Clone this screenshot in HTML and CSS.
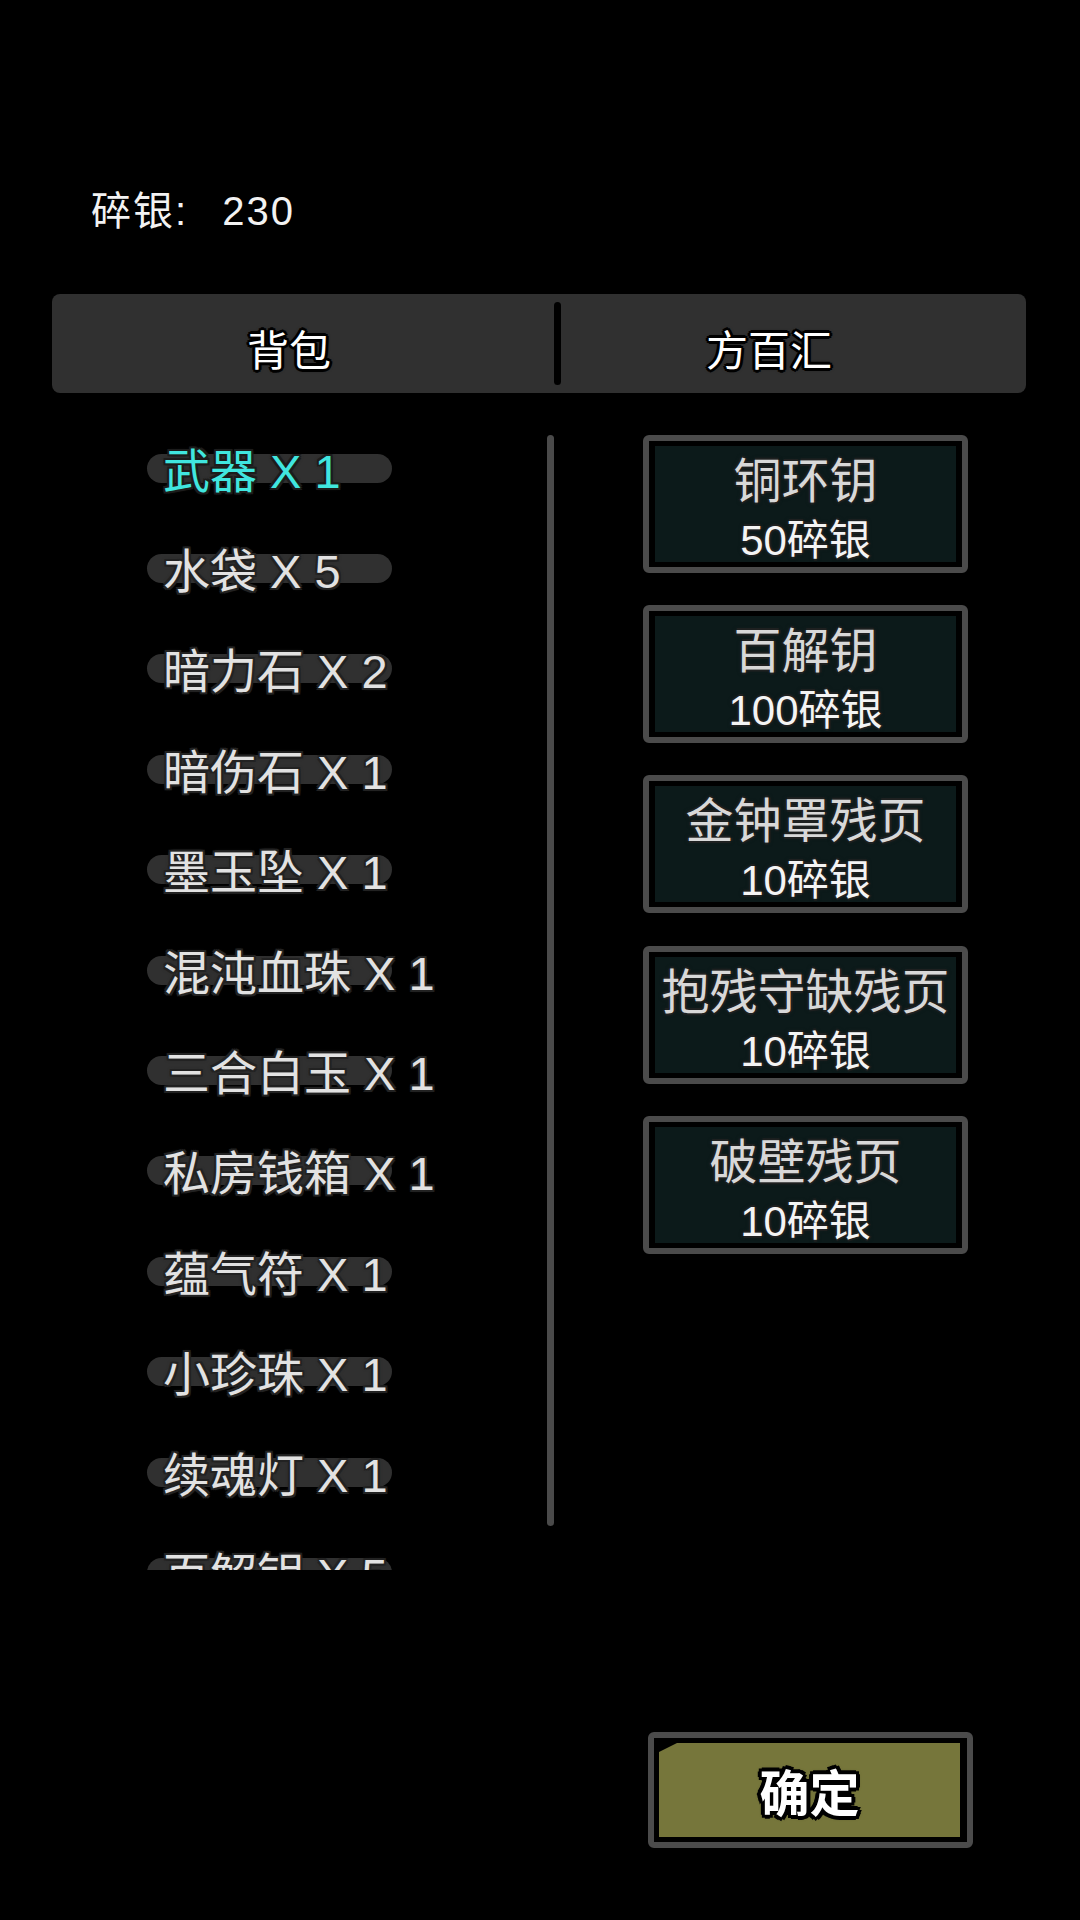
FILE: index.html
```html
<!DOCTYPE html>
<html lang="zh-CN">
<head>
<meta charset="utf-8">
<title>方百汇</title>
<link rel="stylesheet" href="styles.css">
</head>
<body>
<div class="page">
  <div class="wallet">碎银: <span class="amount">230</span></div>
  <div class="tabs">
    <div class="tab tab-left">背包</div>
    <div class="divider"></div>
    <div class="tab tab-right">方百汇</div>
  </div>
  <div class="content">
    <div class="list">
      <div class="item selected"><div class="pill">武器 X 1</div></div>
      <div class="item"><div class="pill">水袋 X 5</div></div>
      <div class="item"><div class="pill">暗力石 X 2</div></div>
      <div class="item"><div class="pill">暗伤石 X 1</div></div>
      <div class="item"><div class="pill">墨玉坠 X 1</div></div>
      <div class="item"><div class="pill">混沌血珠 X 1</div></div>
      <div class="item"><div class="pill">三合白玉 X 1</div></div>
      <div class="item"><div class="pill">私房钱箱 X 1</div></div>
      <div class="item"><div class="pill">蕴气符 X 1</div></div>
      <div class="item"><div class="pill">小珍珠 X 1</div></div>
      <div class="item"><div class="pill">续魂灯 X 1</div></div>
      <div class="item"><div class="pill">百解钥 X 5</div></div>
    </div>
    <div class="scrollbar"></div>
    <div class="shop">
      <div class="good"><div class="good-inner"><div class="name">铜环钥</div><div class="price">50碎银</div></div></div>
      <div class="good"><div class="good-inner"><div class="name">百解钥</div><div class="price">100碎银</div></div></div>
      <div class="good"><div class="good-inner"><div class="name">金钟罩残页</div><div class="price">10碎银</div></div></div>
      <div class="good"><div class="good-inner"><div class="name">抱残守缺残页</div><div class="price">10碎银</div></div></div>
      <div class="good"><div class="good-inner"><div class="name">破壁残页</div><div class="price">10碎银</div></div></div>
    </div>
  </div>
  <div class="footer">
    <div class="confirm"><div class="confirm-fill">确定</div></div>
  </div>
</div>
</body>
</html>
```

FILE: styles.css
```css
html, body {
  margin: 0;
  padding: 0;
  background: #000;
}
body {
  width: 1080px;
  height: 1920px;
  overflow: hidden;
  font-family: "Noto Sans CJK SC", "Noto Sans", sans-serif;
  color: #fff;
}
.page {
  width: 1080px;
  height: 1920px;
  display: flex;
  flex-direction: column;
}

/* wallet */
.wallet {
  margin-top: 181px;
  padding-left: 91px;
  font-family: "Liberation Sans", "Noto Sans CJK SC", sans-serif;
  font-size: 40px;
  letter-spacing: 2px;
  line-height: 60px;
  height: 60px;
  color: #f2f2f2;
  white-space: nowrap;
}
.amount {
  margin-left: 21px;
}

/* tabs */
.tabs {
  margin-top: 53px;
  margin-left: 52px;
  width: 974px;
  height: 99px;
  background: #303030;
  border-radius: 8px;
  display: flex;
  align-items: center;
}
.tab {
  box-sizing: border-box;
  height: 99px;
  padding-top: 8px;
  display: flex;
  align-items: center;
  justify-content: center;
  font-size: 42px;
  color: #fff;
  text-shadow:
    3px 0 0 #000, -3px 0 0 #000, 0 3px 0 #000, 0 -3px 0 #000,
    2px 2px 0 #000, -2px 2px 0 #000, 2px -2px 0 #000, -2px -2px 0 #000,
    0 0 4px #000;
}
.tab-left {
  width: 502px;
  flex: none;
  padding-right: 28px;
}
.tab-right {
  flex: 1;
  padding-right: 49px;
}
.divider {
  width: 7px;
  height: 83px;
  background: #000;
  border-radius: 4px;
  flex: none;
}

/* content */
.content {
  margin-top: 25px;
  display: flex;
  align-items: flex-start;
}
.list {
  box-sizing: border-box;
  width: 547px;
  height: 1152px;
  padding-left: 147px;
  overflow: hidden;
  flex: none;
}
.item {
  height: 100.4px;
  display: flex;
  align-items: center;
}
.pill {
  box-sizing: border-box;
  width: 245px;
  height: 29px;
  border-radius: 15px;
  background: #303030;
  padding: 3px 0 0 16px;
  line-height: 29px;
  font-family: "Liberation Sans", "Noto Sans CJK SC", sans-serif;
  font-size: 47px;
  white-space: nowrap;
  color: #e2e2e2;
  text-shadow:
    2px 0 0 #222, -2px 0 0 #222, 0 2px 0 #222, 0 -2px 0 #222,
    2px 2px 0 #222, -2px 2px 0 #222, 2px -2px 0 #222, -2px -2px 0 #222,
    0 0 4px #222;
}
.selected .pill {
  color: #40e6df;
  text-shadow:
    2px 0 0 #1c1c1c, -2px 0 0 #1c1c1c, 0 2px 0 #1c1c1c, 0 -2px 0 #1c1c1c,
    2px 2px 0 #1c1c1c, -2px 2px 0 #1c1c1c, 2px -2px 0 #1c1c1c, -2px -2px 0 #1c1c1c,
    0 0 4px #1c1c1c;
}
.scrollbar {
  width: 7px;
  height: 1091px;
  margin-top: 17px;
  background: #4a4a4a;
  border-radius: 4px;
  flex: none;
}

/* shop */
.shop {
  margin-left: 89px;
  padding-top: 17px;
  display: flex;
  flex-direction: column;
  gap: 32.2px;
}
.good {
  box-sizing: border-box;
  width: 325px;
  height: 138px;
  border: 6px solid #4b4b4b;
  border-radius: 6px;
  padding: 5px 6px;
  background: #000;
}
.good-inner {
  box-sizing: border-box;
  height: 100%;
  background: #0c1a1a;
  padding-top: 2px;
  display: flex;
  flex-direction: column;
  align-items: center;
  text-align: center;
  white-space: nowrap;
}
.name {
  font-size: 48px;
  line-height: 58px;
  color: #d8d8d8;
  text-shadow:
    2px 0 0 #1e2020, -2px 0 0 #1e2020, 0 2px 0 #1e2020, 0 -2px 0 #1e2020,
    0 0 4px #1e2020;
}
.price {
  padding-top: 4px;
  font-family: "Liberation Sans", "Noto Sans CJK SC", sans-serif;
  font-size: 42px;
  line-height: 62px;
  color: #f4f4f4;
  text-shadow:
    2px 0 0 #1e2020, -2px 0 0 #1e2020, 0 2px 0 #1e2020, 0 -2px 0 #1e2020,
    0 0 4px #1e2020;
}

/* footer */
.footer {
  margin-top: 162px;
  padding-left: 648px;
}
.confirm {
  box-sizing: border-box;
  width: 325px;
  height: 116px;
  border: 6px solid #4b4b4b;
  border-radius: 6px;
  padding: 5px 7px 5px 5px;
  background: #000;
}
.confirm-fill {
  height: 100%;
  background: #76763b;
  clip-path: polygon(18px 0, 100% 0, 100% 100%, 0 100%, 0 9px);
  display: flex;
  align-items: center;
  justify-content: center;
  font-size: 50px;
  font-weight: bold;
  color: #fff;
  text-shadow:
    4px 0 0 #000, -4px 0 0 #000, 0 4px 0 #000, 0 -4px 0 #000,
    3px 3px 0 #000, -3px 3px 0 #000, 3px -3px 0 #000, -3px -3px 0 #000,
    0 0 5px #000;
}
```
